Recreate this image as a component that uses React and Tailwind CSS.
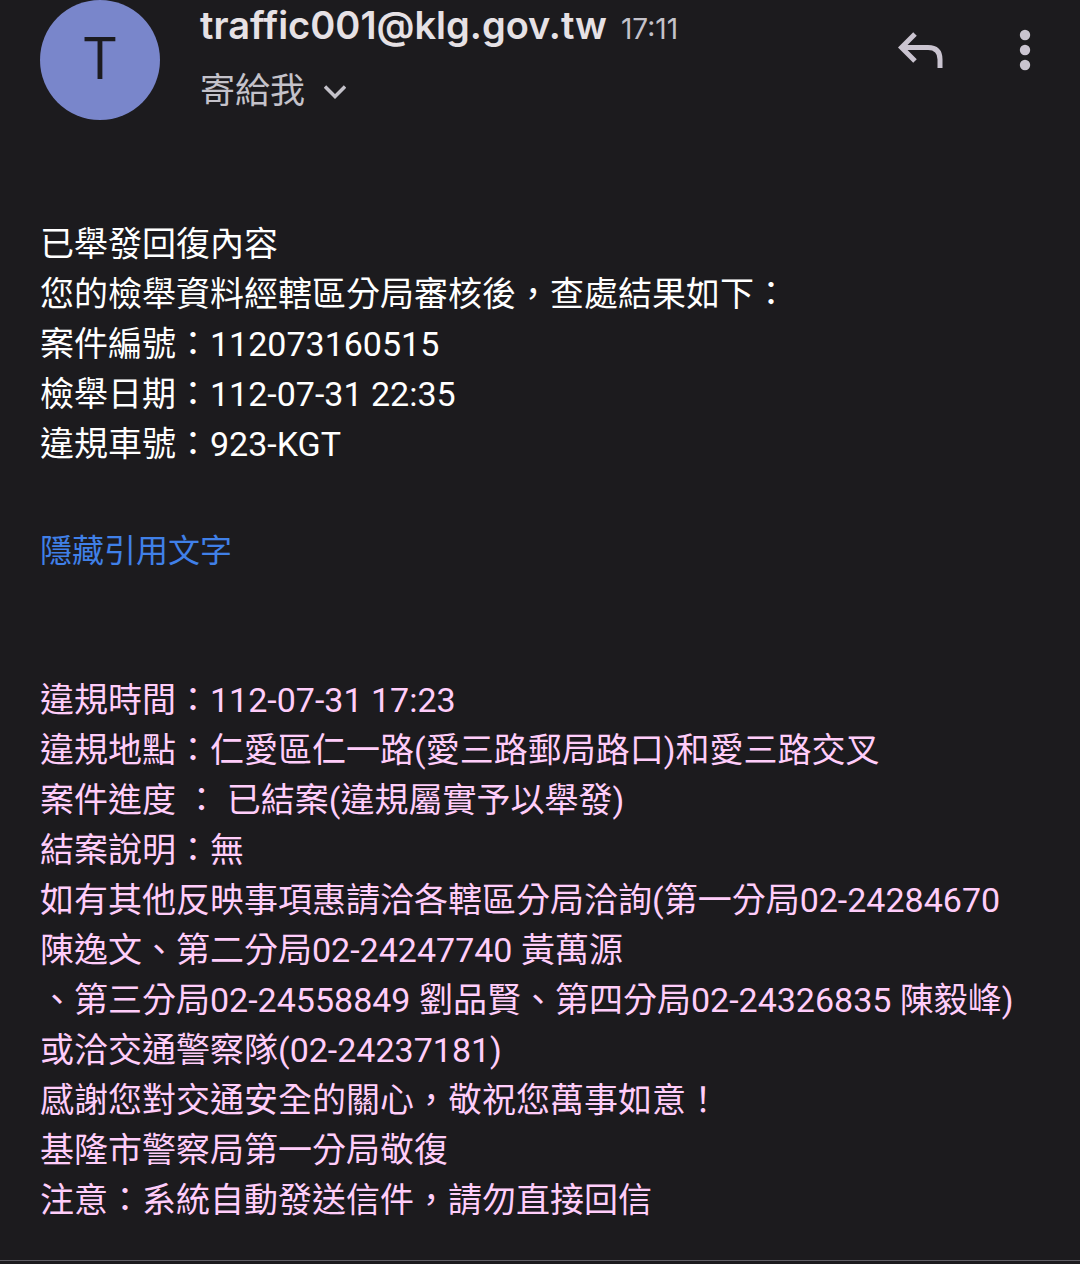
import React from 'react'

const reportLines = [
  '已舉發回復內容',
  '您的檢舉資料經轄區分局審核後，查處結果如下：',
  '案件編號：112073160515',
  '檢舉日期：112-07-31 22:35',
  '違規車號：923-KGT',
]

const quotedLines = [
  '違規時間：112-07-31 17:23',
  '違規地點：仁愛區仁一路(愛三路郵局路口)和愛三路交叉',
  '案件進度 ： 已結案(違規屬實予以舉發)',
  '結案說明：無',
  '如有其他反映事項惠請洽各轄區分局洽詢(第一分局02-24284670 陳逸文、第二分局02-24247740 黃萬源',
  '、第三分局02-24558849 劉品賢、第四分局02-24326835 陳毅峰)或洽交通警察隊(02-24237181)',
  '感謝您對交通安全的關心，敬祝您萬事如意！',
  '基隆市警察局第一分局敬復',
  '注意：系統自動發送信件，請勿直接回信',
]

function MailHeader() {
  return (
    <header className="flex items-start px-10">
      <div className="flex size-[120px] shrink-0 items-center justify-center rounded-full bg-[#7986cb] pb-1.5 font-['Open_Sans',sans-serif] text-[58px] leading-none text-[#1c1b1f]">
        T
      </div>
      <div className="ml-10 min-w-0 flex-1">
        <div className="flex items-baseline gap-3.5 font-['Inter',sans-serif] leading-[50px]">
          <h1 className="text-[38px] font-semibold text-[#e6e1e5]">traffic001@klg.gov.tw</h1>
          <time className="text-[28px] text-[#c4c2ca]">17:11</time>
        </div>
        <button type="button" className="mt-[11px] flex items-center gap-[19px] text-[35px] leading-[54px] text-[#c4c2ca]">
          寄給我
          <svg viewBox="0 0 22 14" className="h-3.5 w-[22px]" fill="none" stroke="currentColor" strokeWidth="3.4">
            <path d="M1 1.5l10 10L21 1.5" />
          </svg>
        </button>
      </div>
      <div className="flex items-center pt-7 text-[#cac4d0]">
        <button type="button" aria-label="回覆">
          <svg viewBox="0 0 46 44" className="h-11 w-[46px]" fill="none" stroke="currentColor" strokeWidth="5">
            <path d="M17 6L3.5 19.500L17 33M3.500 19.500H30q12 0 12 12v8.500" />
          </svg>
        </button>
        <button type="button" aria-label="更多選項" className="ml-[66px] flex w-[30px] justify-center">
          <svg viewBox="0 0 12 44" className="h-11 w-3" fill="currentColor">
            <circle cx="6" cy="7" r="5.2" />
            <circle cx="6" cy="22" r="5.2" />
            <circle cx="6" cy="37" r="5.2" />
          </svg>
        </button>
      </div>
    </header>
  )
}

export default function App() {
  return (
    <div className="min-h-screen bg-[#1c1b1e] font-['Roboto','Noto_Sans_CJK_TC',sans-serif]">
      <MailHeader />
      <main className="px-10 pt-[99px] text-[34px] leading-[50px] text-white">
        {reportLines.map((line) => (
          <p key={line}>{line}</p>
        ))}
        <button type="button" className="mt-[57px] block text-[32px] text-[#4080e8]">
          隱藏引用文字
        </button>
        <div className="mt-[99px] text-[#ffcdfa]">
          {quotedLines.map((line) => (
            <p key={line}>{line}</p>
          ))}
        </div>
      </main>
      <hr className="mt-[35px] border-[#5f5d64]" />
    </div>
  )
}
